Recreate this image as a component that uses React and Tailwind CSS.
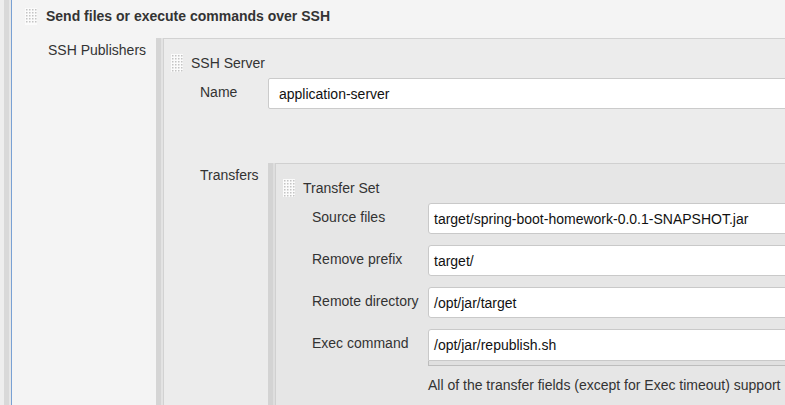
import React from "react";

function Handle({ h = 18 }) {
  const rows = [];
  for (let y = 1; y + 1 < h; y += 3) {
    for (let x = 1; x < 12; x += 3) {
      rows.push(<rect key={`${x}-${y}`} x={x} y={y} width="1.5" height="1.5" fill="#c4c4c4" />);
    }
  }
  return (
    <svg width="12" height={h} viewBox={`0 0 12 ${h}`} className="shrink-0 block">
      <rect x="0" y="0" width="12" height={h} fill="#fbfbfb" />
      {rows}
    </svg>
  );
}

function Field({ label, value, last }) {
  return (
    <div className={`flex ${last ? "" : "mb-[11px]"}`}>
      <div className="w-[152px] shrink-0 pl-[36px] pt-[6px] leading-4 text-[#333]">{label}</div>
      <div className="flex-1 min-w-0">
        <div className="h-[31px] bg-white border border-[#c9c9c9] rounded-[3px] pl-[5px] flex items-center leading-4 text-[#111] whitespace-nowrap">
          {value}
        </div>
      </div>
    </div>
  );
}

export default function App() {
  return (
    <div
      className="w-[785px] h-[405px] overflow-hidden bg-[#eeeeee] text-[14px]"
      style={{ fontFamily: '"Liberation Sans", Arial, sans-serif' }}
    >
      <div className="w-[960px] h-[405px] flex pl-[4px]">
        <div className="w-[5px] shrink-0 bg-[#d9d9d9]" />
        <div className="w-[2px] shrink-0 bg-[#e7e7e7]" />
        <div className="flex-1 min-w-0 border-l border-[#79a1d4] bg-[#f4f4f4] flex flex-col">
          {/* Title */}
          <div className="h-[38px] shrink-0 flex items-start pl-[13px] pt-[8px]">
            <Handle h={17} />
            <span className="ml-[9px] font-bold leading-4 text-[#333]">
              Send files or execute commands over SSH
            </span>
          </div>
          <div className="flex flex-1 min-h-0">
            <div className="w-[144px] shrink-0 pl-[36px] pt-[4px] leading-4 text-[#333]">SSH Publishers</div>
            <div className="flex flex-1 min-w-0">
              <div className="w-[5px] shrink-0 bg-[#d5d5d5]" />
              <div className="w-[2px] shrink-0 bg-[#e3e3e3]" />
              <div className="flex-1 min-w-0 border-l border-t border-[#d2d2d2] bg-[#ececec] flex flex-col">
                {/* SSH Server header */}
                <div className="flex items-center pl-[7px] pt-[15px]">
                  <Handle h={18} />
                  <span className="ml-[8px] leading-4 text-[#333]">SSH Server</span>
                </div>
                {/* Name row */}
                <div className="flex mt-[6px]">
                  <div className="w-[104px] shrink-0 pl-[36px] pt-[6px] leading-4 text-[#333]">Name</div>
                  <div className="flex-1 min-w-0">
                    <div className="h-[31px] bg-white border border-[#cbcbcb] rounded-[2px] pl-[10px] flex items-center leading-4 text-[#111]">
                      application-server
                    </div>
                  </div>
                </div>
                {/* Transfers row */}
                <div className="flex mt-[54px] flex-1">
                  <div className="w-[104px] shrink-0 pl-[36px] pt-[4px] leading-4 text-[#333]">Transfers</div>
                  <div className="flex flex-1 min-w-0">
                    <div className="w-[5px] shrink-0 bg-[#d3d3d3]" />
                    <div className="w-[2px] shrink-0 bg-[#dedede]" />
                    <div className="flex-1 min-w-0 border-l border-t border-[#d0d0d0] bg-[#e6e6e6] flex flex-col">
                      <div className="flex items-center pl-[7px] pt-[15px]">
                        <Handle h={18} />
                        <span className="ml-[8px] leading-4 text-[#333]">Transfer Set</span>
                      </div>
                      <div className="mt-[6px] flex flex-col">
                        <Field label="Source files" value="target/spring-boot-homework-0.0.1-SNAPSHOT.jar" />
                        <Field label="Remove prefix" value="target/" />
                        <Field label="Remote directory" value="/opt/jar/target" />
                        <div className="flex">
                          <div className="w-[152px] shrink-0 pl-[36px] pt-[6px] leading-4 text-[#333]">Exec command</div>
                          <div className="flex-1 min-w-0">
                            <div className="h-[32px] bg-white border border-[#c9c9c9] rounded-t-[3px] pl-[5px] flex items-center leading-4 text-[#111]">
                              /opt/jar/republish.sh
                            </div>
                            <div className="h-[5px] bg-[#e0e0e0] border-l border-b border-[#bdbdbd]" />
                          </div>
                        </div>
                        <div className="flex mt-[11px]">
                          <div className="w-[152px] shrink-0" />
                          <div className="leading-4 text-[#333] whitespace-nowrap">
                            All of the transfer fields (except for Exec timeout) support
                          </div>
                        </div>
                      </div>
                    </div>
                  </div>
                </div>
              </div>
            </div>
          </div>
        </div>
      </div>
    </div>
  );
}
